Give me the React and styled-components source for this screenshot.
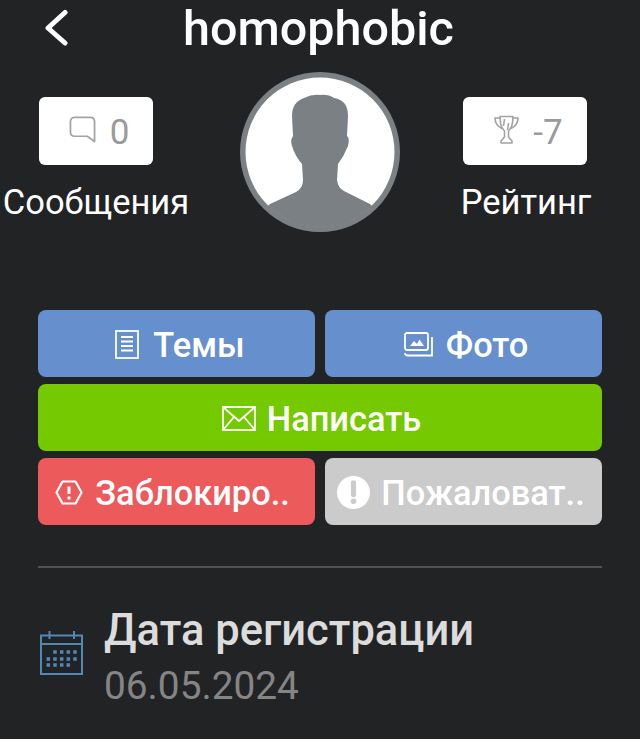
import { createGlobalStyle } from "styled-components";
import styled from "styled-components";

const GlobalStyle = createGlobalStyle`
  html, body {
    margin: 0;
    padding: 0;
    background: #222325;
    font-family: Roboto, "Noto Sans", sans-serif;
  }
  * {
    box-sizing: border-box;
  }
`;

const Page = styled.div`
  width: 640px;
  height: 739px;
  overflow: hidden;
  background: #222325;
`;

const Header = styled.header`
  height: 72px;
  display: grid;
  grid-template-columns: 140px auto;
  padding-left: 43px;
`;

const BackButton = styled.div`
  padding-top: 9px;
  svg {
    display: block;
  }
`;

const Title = styled.h1`
  margin: 0;
  font-size: 48.5px;
  line-height: 58px;
  font-weight: 500;
  color: #fff;
`;

const Stats = styled.section`
  display: grid;
  grid-template-columns: 192px 269px 130px;
  height: 238px;
`;

const Stat = styled.div`
  display: flex;
  flex-direction: column;
  align-items: center;
  padding-top: 25px;
`;

const StatBox = styled.div`
  width: ${({ $width }) => $width}px;
  height: 68px;
  margin-right: ${({ $nudge }) => $nudge ?? 0}px;
  padding: 2px 0 0 ${({ $inset }) => $inset}px;
  border-radius: 6px;
  background: #fff;
  display: flex;
  align-items: center;
  justify-content: center;
  gap: 14px;
  color: #9a9a9a;
  font-size: 35px;
  svg {
    flex: none;
    margin-bottom: 6px;
  }
`;

const StatLabel = styled.div`
  margin-top: 17px;
  font-size: 34.5px;
  line-height: 40px;
  color: #fff;
  white-space: nowrap;
`;

const Avatar = styled.div`
  width: 160px;
  height: 160px;
  margin: 0 61px 0 48px;
  svg {
    display: block;
  }
  g {
    filter: blur(0.6px);
  }
`;

const Actions = styled.section`
  margin: 0 38px;
  display: grid;
  grid-template-columns: 1fr 1fr;
  column-gap: 10px;
  row-gap: 7px;
`;

const ActionButton = styled.div`
  grid-column: ${({ $wide }) => ($wide ? "1 / 3" : "auto")};
  height: 67px;
  padding: 2px ${({ $right }) => $right ?? 0}px 0 ${({ $left }) => $left ?? 0}px;
  border-radius: 8px;
  background: ${({ $color }) => $color};
  color: #fff;
  display: flex;
  align-items: center;
  justify-content: center;
  gap: ${({ $gap }) => $gap ?? 14}px;
  font-size: 34.4px;
  font-weight: 500;
  white-space: nowrap;
  svg {
    flex: none;
  }
`;

const Divider = styled.hr`
  margin: 41px 38px 0;
  border: 0;
  height: 2px;
  background: #4f5154;
`;

const InfoRow = styled.section`
  margin: 36px 0 0 40px;
  display: flex;
  align-items: flex-start;
  gap: 21px;
  svg {
    margin-top: 27px;
  }
`;

const InfoText = styled.div`
  display: flex;
  flex-direction: column;
`;

const InfoTitle = styled.div`
  font-size: 43.5px;
  line-height: 54px;
  font-weight: 500;
  color: #dcdcdc;
`;

const InfoValue = styled.div`
  font-size: 38.8px;
  line-height: 56px;
  color: #858585;
`;

const ChevronIcon = () => (
  <svg width="26" height="38" viewBox="0 0 26 38" fill="none">
    <path d="M22 3.5 L5 19 L22 34" stroke="#fff" strokeWidth="5" strokeLinecap="round" strokeLinejoin="round" />
  </svg>
);

const ChatIcon = () => (
  <svg width="27" height="27" viewBox="0 0 28 28" fill="none" stroke="#a3a3a3" strokeWidth="1.8">
    <path d="M6 1.5 H22 Q26.5 1.5 26.5 6 V26.5 L19 21 H6 Q1.5 21 1.5 16.5 V6 Q1.5 1.5 6 1.5 Z" strokeLinejoin="round" />
  </svg>
);

const TrophyIcon = () => (
  <svg width="25" height="29" viewBox="0 0 25 29" fill="none" stroke="#a3a3a3" strokeWidth="1.6">
    <path d="M6 1.5 H19 Q19 12 14.5 16 V22 L18 26 V28 H7 V26 L10.5 22 V16 Q6 12 6 1.5 Z" strokeLinejoin="round" />
    <path d="M6 3 H1 Q1 10 8 13.5 M19 3 H24 Q24 10 17 13.5" />
    <path d="M10.5 4 L9.5 11 M14.5 8 L13.5 15" />
  </svg>
);

const PersonAvatar = () => (
  <svg width="160" height="160" viewBox="0 0 160 160">
    <circle cx="80" cy="80" r="80" fill="#7b8084" />
    <clipPath id="face">
      <circle cx="80" cy="80" r="75" />
    </clipPath>
    <g>
      <circle cx="80" cy="80" r="74.5" fill="#fff" />
      <path
        clipPath="url(#face)"
        fill="#7b8084"
        d="M64 26 Q72 22 80 23 Q88 22 94 26 Q108 28 108 44 L107 64 Q110 66 108 74 Q104 84 98 92 L97 108 Q98 116 104 119 L130 132 L160 160 H0 L30 132 L56 120 Q63 116 63 108 L62 92 Q55 84 52 74 Q50 68 53 64 L52 44 Q52 30 64 26 Z"
      />
    </g>
  </svg>
);

const ListIcon = () => (
  <svg width="24" height="29" viewBox="0 0 24 29" fill="none" stroke="#fff" strokeWidth="1.8">
    <rect x="1" y="1" width="22" height="27" />
    <path d="M6 7 H18 M6 11.5 H18 M6 16 H18 M6 20.5 H18" />
  </svg>
);

const PhotoIcon = () => (
  <svg width="29" height="25" viewBox="0 0 29 25" fill="none" stroke="#fff" strokeWidth="1.8">
    <rect x="1" y="1" width="23" height="17" rx="2" />
    <path d="M1 21 Q1 23.5 4 23.5 H28 V5" />
    <path d="M6 14 L10 9 L13 12 L15.5 7.5 L20 14 Z" fill="#fff" stroke="none" />
  </svg>
);

const MailIcon = () => (
  <svg width="34" height="25" viewBox="0 0 34 25" fill="none" stroke="#fff" strokeWidth="1.8">
    <rect x="1" y="1" width="32" height="23" />
    <path d="M1 1 L17 15 L33 1 M1 24 L12 11 M33 24 L22 11" />
  </svg>
);

const BlockIcon = () => (
  <svg width="28" height="25" viewBox="0 0 28 25" fill="none">
    <path d="M7.5 1.5 H20.5 L26.5 12.5 L20.5 23.5 H7.5 L1.5 12.5 Z" stroke="#fff" strokeWidth="2.2" strokeLinejoin="round" />
    <path d="M14 6.5 V14" stroke="#fff" strokeWidth="3" />
    <circle cx="14" cy="18" r="1.7" fill="#fff" />
  </svg>
);

const ReportIcon = () => (
  <svg width="33" height="33" viewBox="0 0 32 32">
    <circle cx="16" cy="16" r="16" fill="#fff" />
    <path d="M16 6.5 V18" stroke="#cbcbcb" strokeWidth="5" strokeLinecap="round" />
    <circle cx="16" cy="24.5" r="2.7" fill="#cbcbcb" />
  </svg>
);

const calendarDots = [
  [15, 21], [21.7, 21], [28.3, 21], [35, 21],
  [8.3, 28], [15, 28], [21.7, 28], [28.3, 28], [35, 28],
  [8.3, 34], [15, 34], [21.7, 34], [28.3, 34],
];

const CalendarIcon = () => (
  <svg width="43" height="44" viewBox="0 0 43 44" fill="none" stroke="#5188b8" strokeWidth="2">
    <rect x="1" y="4.5" width="41" height="38.5" />
    <path d="M1 13 H42 M9.5 0 V8 M34 0 V8" />
    <g fill="#5188b8" stroke="none">
      {calendarDots.map(([x, y]) => (
        <rect key={`${x}-${y}`} x={x - 1.75} y={y - 1.75} width="3.5" height="3.5" />
      ))}
    </g>
  </svg>
);

const App = () => {
  return (
    <Page>
      <GlobalStyle />
      <Header>
        <BackButton>
          <ChevronIcon />
        </BackButton>
        <Title>homophobic</Title>
      </Header>

      <Stats>
        <Stat>
          <StatBox $width={114} $inset={6}>
            <ChatIcon />
            0
          </StatBox>
          <StatLabel>Сообщения</StatLabel>
        </Stat>
        <Avatar>
          <PersonAvatar />
        </Avatar>
        <Stat>
          <StatBox $width={124} $inset={7} $nudge={2}>
            <TrophyIcon />
            -7
          </StatBox>
          <StatLabel>Рейтинг</StatLabel>
        </Stat>
      </Stats>

      <Actions>
        <ActionButton $color="#6690cd" $left={7}>
          <ListIcon />
          Темы
        </ActionButton>
        <ActionButton $color="#6690cd" $gap={13} $left={5}>
          <PhotoIcon />
          Фото
        </ActionButton>
        <ActionButton $wide $color="#74c900" $gap={11} $left={3}>
          <MailIcon />
          Написать
        </ActionButton>
        <ActionButton $color="#ec5a5c" $gap={12} $right={8}>
          <BlockIcon />
          Заблокиро..
        </ActionButton>
        <ActionButton $color="#cbcbcb" $gap={11} $right={5}>
          <ReportIcon />
          Пожаловат..
        </ActionButton>
      </Actions>

      <Divider />

      <InfoRow>
        <CalendarIcon />
        <InfoText>
          <InfoTitle>Дата регистрации</InfoTitle>
          <InfoValue>06.05.2024</InfoValue>
        </InfoText>
      </InfoRow>
    </Page>
  );
};

export default App;
